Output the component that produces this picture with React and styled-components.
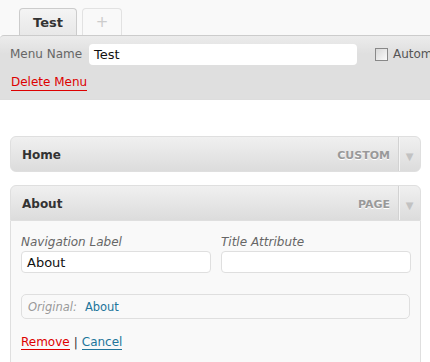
import React from "react";
import styled, { createGlobalStyle } from "styled-components";

const Global = createGlobalStyle`
  html, body {
    margin: 0;
    padding: 0;
    background: #fff;
  }
  body {
    font-family: "DejaVu Sans", Verdana, sans-serif;
    font-size: 12px;
    color: #333;
  }
`;

const Page = styled.div`
  width: 430px;
  height: 362px;
  overflow: hidden;
  background: #fff;
`;

const TabStrip = styled.div`
  display: flex;
  align-items: flex-end;
  gap: 5px;
  height: 35px;
  padding-left: 19px;
  background: #f9f9f9;
`;

const Tab = styled.div`
  display: flex;
  align-items: center;
  justify-content: center;
  box-sizing: border-box;
  width: ${p => p.$width}px;
  height: 27px;
  border: 1px solid ${p => (p.$active ? "#ccc" : "#e2e2e2")};
  border-bottom: none;
  border-radius: 4px 4px 0 0;
  background: ${p =>
    p.$active ? "linear-gradient(#f4f4f4, #e8e8e8)" : "#f9f9f9"};
  color: ${p => (p.$active ? "#333" : "#ccc")};
  font-weight: ${p => (p.$active ? "bold" : "normal")};
  font-size: ${p => (p.$active ? "13px" : "15px")};
`;

const HeaderBar = styled.div`
  box-sizing: border-box;
  height: 65px;
  padding: 7px 10px 0;
  border-top: 1px solid #ccc;
  border-bottom: 1px solid #ddd;
  border-top-left-radius: 4px;
  background: linear-gradient(#ececec, #dfdfdf 18px);
  white-space: nowrap;
  overflow: hidden;
`;

const NameRow = styled.div`
  display: flex;
  align-items: center;
  height: 22px;
  & > * {
    flex-shrink: 0;
  }
`;

const NameLabel = styled.span`
  color: #666;
  font-size: 12px;
  width: 79px;
`;

const NameInput = styled.div`
  box-sizing: border-box;
  width: 268px;
  height: 21px;
  padding: 1px 5px 0;
  display: flex;
  align-items: center;
  background: #fff;
  border-radius: 4px;
  font-size: 13px;
  color: #111;
`;

const Check = styled.span`
  box-sizing: border-box;
  width: 13px;
  height: 13px;
  margin-left: 18px;
  border: 1px solid #888;
  background: linear-gradient(135deg, #d8d8d8, #fafafa);
`;

const CheckText = styled.span`
  margin-left: 5px;
  color: #555;
  font-size: 12px;
`;

const DeleteLink = styled.a`
  display: inline-block;
  margin-top: 10px;
  margin-left: 1px;
  padding-bottom: 1px;
  color: #d00;
  font-size: 12px;
  text-decoration: none;
  border-bottom: 1px solid #d00;
`;

const ItemList = styled.div`
  display: flex;
  flex-direction: column;
  gap: 13px;
  padding: 36px 9px 0 10px;
`;

const ItemHead = styled.div`
  display: flex;
  align-items: center;
  box-sizing: border-box;
  height: 36px;
  padding-top: 2px;
  border: 1px solid #dfdfdf;
  border-radius: ${p => (p.$open ? "6px 6px 0 0" : "6px")};
  background: linear-gradient(#f0f0f0, #dcdcdc);
`;

const ItemTitle = styled.span`
  flex: 1;
  padding-left: 11px;
  font-weight: bold;
  font-size: 12px;
  color: #333;
`;

const ItemType = styled.span`
  padding-right: 8px;
  font-weight: bold;
  font-size: 11px;
  color: #999;
  text-shadow: 0 1px 0 #fff;
`;

const Handle = styled.span`
  display: flex;
  align-items: center;
  justify-content: center;
  align-self: stretch;
  width: 21px;
  margin-top: -2px;
  padding-top: 4px;
  border-left: 1px solid #d2d2d2;
  box-shadow: inset 1px 0 0 #f5f5f5;
  color: #c2c2c2;
  font-size: 10px;
`;

const ItemBody = styled.div`
  box-sizing: border-box;
  height: 160px;
  padding: 14px 10px 0;
  border: 1px solid #dfdfdf;
  border-top: none;
  background: #f9f9f9;
`;

const FieldRow = styled.div`
  display: grid;
  grid-template-columns: 190px 190px;
  gap: 10px;
`;

const Field = styled.label`
  display: flex;
  flex-direction: column;
  gap: 2px;
`;

const FieldLabel = styled.span`
  font-style: italic;
  color: #666;
  font-size: 12px;
`;

const FieldInput = styled.div`
  box-sizing: border-box;
  height: 22px;
  padding: 0 5px;
  display: flex;
  align-items: center;
  background: #fff;
  border: 1px solid #dfdfdf;
  border-radius: 4px;
  font-size: 13px;
  color: #111;
`;

const Original = styled.div`
  box-sizing: border-box;
  display: flex;
  align-items: center;
  gap: 8px;
  height: 25px;
  margin-top: 21px;
  padding-left: 6px;
  border: 1px solid #dfdfdf;
  border-radius: 5px;
  font-size: 11.5px;
`;

const OriginalLabel = styled.span`
  font-style: italic;
  color: #999;
`;

const BlueLink = styled.a`
  color: #21759b;
  text-decoration: none;
  border-bottom: ${p => (p.$underline ? "1px solid #21759b" : "none")};
`;

const Actions = styled.div`
  display: flex;
  align-items: center;
  gap: 4px;
  margin-top: 16px;
  font-size: 12px;
`;

const RedLink = styled.a`
  color: #d00;
  text-decoration: none;
  border-bottom: 1px solid #d00;
`;

const Sep = styled.span`
  color: #333;
`;

const Item = ({ title, type, open, children }) => (
  <div>
    <ItemHead $open={open}>
      <ItemTitle>{title}</ItemTitle>
      <ItemType>{type}</ItemType>
      <Handle>▼</Handle>
    </ItemHead>
    {open && <ItemBody>{children}</ItemBody>}
  </div>
);

export default function App() {
  return (
    <Page>
      <Global />
      <TabStrip>
        <Tab $active $width={58}>Test</Tab>
        <Tab $width={40}>+</Tab>
      </TabStrip>
      <HeaderBar>
        <NameRow>
          <NameLabel>Menu Name</NameLabel>
          <NameInput>Test</NameInput>
          <Check />
          <CheckText>Autom</CheckText>
        </NameRow>
        <DeleteLink>Delete Menu</DeleteLink>
      </HeaderBar>
      <ItemList>
        <Item title="Home" type="CUSTOM" />
        <Item title="About" type="PAGE" open>
          <FieldRow>
            <Field>
              <FieldLabel>Navigation Label</FieldLabel>
              <FieldInput>About</FieldInput>
            </Field>
            <Field>
              <FieldLabel>Title Attribute</FieldLabel>
              <FieldInput />
            </Field>
          </FieldRow>
          <Original>
            <OriginalLabel>Original:</OriginalLabel>
            <BlueLink>About</BlueLink>
          </Original>
          <Actions>
            <RedLink>Remove</RedLink>
            <Sep>|</Sep>
            <BlueLink $underline>Cancel</BlueLink>
          </Actions>
        </Item>
      </ItemList>
    </Page>
  );
}
